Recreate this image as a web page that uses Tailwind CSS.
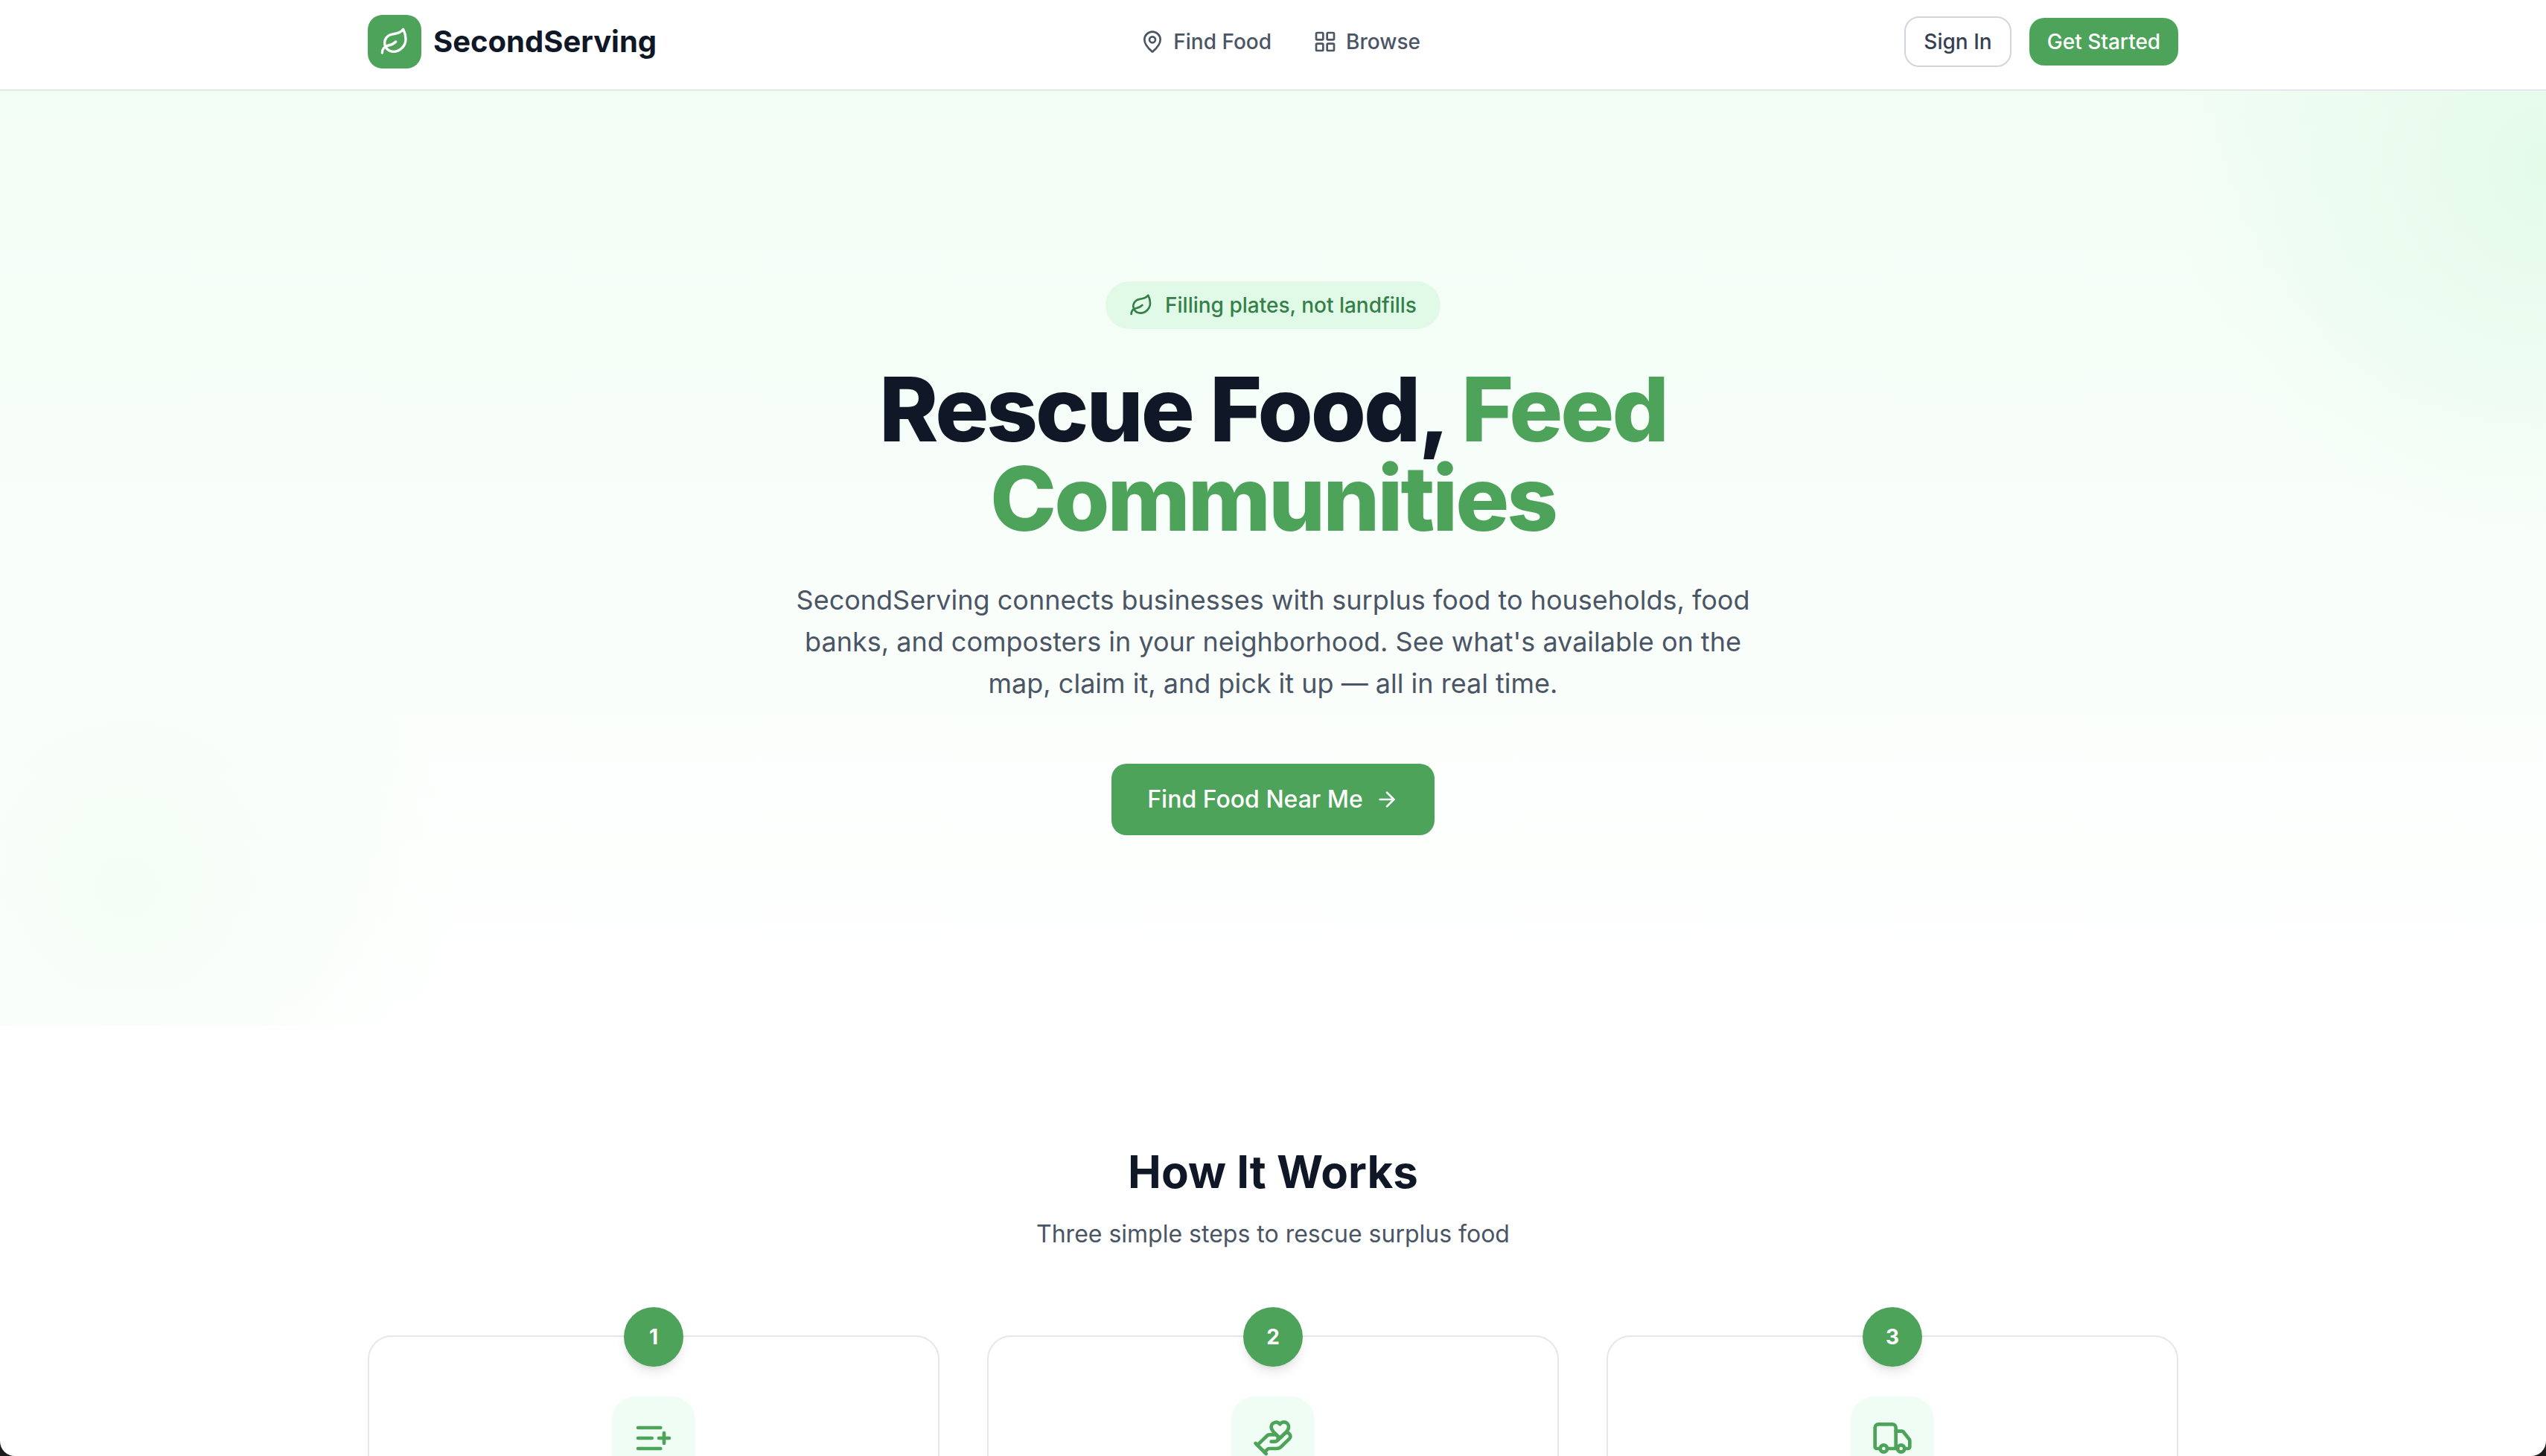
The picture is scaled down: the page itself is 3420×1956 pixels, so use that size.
<!DOCTYPE html>
<html lang="en">
<head>
<meta charset="utf-8">
<title>SecondServing</title>
<script src="https://cdn.jsdelivr.net/npm/@tailwindcss/browser@4"></script>
</head>
<body class="bg-[#1c1c1c] font-['Inter',sans-serif]">
<div class="h-[1956px] overflow-hidden rounded-b-[20px] bg-white">
  <header class="h-[122px] border-b-2 border-gray-200 bg-white pb-2">
    <div class="mx-auto flex h-[112px] w-[2432px] items-center justify-between">
      <a class="flex items-center gap-4">
        <span class="flex h-[72px] w-[72px] items-center justify-center rounded-[20px] bg-[#4ea35a]">
          <svg class="h-10 w-10" viewBox="0 0 24 24" fill="none" stroke="#fff" stroke-width="2" stroke-linecap="round" stroke-linejoin="round"><path d="M11 20A7 7 0 0 1 9.8 6.1C15.5 5 17 4.48 19 2c1 2 2 4.18 2 8 0 5.5-4.78 10-10 10Z"/><path d="M2 21c0-3 1.85-5.36 5.08-6C9.5 14.52 12 13 13 12"/></svg>
        </span>
        <span class="text-[40px] leading-[56px] font-bold text-gray-900">SecondServing</span>
      </a>
      <nav class="flex items-center gap-10 text-[28px] leading-[40px] font-medium text-gray-600">
        <a class="flex items-center gap-3 px-2 py-2">
          <svg class="h-8 w-8" viewBox="0 0 24 24" fill="none" stroke="currentColor" stroke-width="2" stroke-linecap="round" stroke-linejoin="round"><path d="M20 10c0 4.993-5.539 10.193-7.399 11.799a1 1 0 0 1-1.202 0C9.539 20.193 4 14.993 4 10a8 8 0 0 1 16 0"/><circle cx="12" cy="10" r="3"/></svg>
          Find Food
        </a>
        <a class="flex items-center gap-3 px-2 py-2">
          <svg class="h-8 w-8" viewBox="0 0 24 24" fill="none" stroke="currentColor" stroke-width="2" stroke-linecap="round" stroke-linejoin="round"><rect x="3" y="3" width="7" height="7" rx="1"/><rect x="14" y="3" width="7" height="7" rx="1"/><rect x="14" y="14" width="7" height="7" rx="1"/><rect x="3" y="14" width="7" height="7" rx="1"/></svg>
          Browse
        </a>
      </nav>
      <div class="flex items-center gap-6">
        <a class="flex h-[68px] w-[144px] items-center justify-center rounded-[20px] border-2 border-gray-300 bg-white text-[28px] font-medium text-gray-700">Sign In</a>
        <a class="flex h-16 w-[200px] items-center justify-center rounded-[20px] bg-[#4ea35a] text-[28px] font-medium text-white">Get Started</a>
      </div>
    </div>
  </header>

  <section class="relative h-[1256px] bg-[linear-gradient(to_bottom,#f2fdf5,#ffffff)]">
    <div class="absolute inset-0 bg-[radial-gradient(circle_at_100%_8%,#e4fbea_0%,transparent_500px),radial-gradient(circle_at_5%_85%,#f4fdf6_0%,transparent_440px)]"></div>
    <div class="relative flex flex-col items-center pt-[256px]">
      <div class="flex h-16 items-center gap-4 rounded-full bg-[#e1f9e7] px-8 text-[28px] font-medium text-[#358049]">
        <svg class="h-8 w-8" viewBox="0 0 24 24" fill="none" stroke="currentColor" stroke-width="2" stroke-linecap="round" stroke-linejoin="round"><path d="M11 20A7 7 0 0 1 9.8 6.1C15.5 5 17 4.48 19 2c1 2 2 4.18 2 8 0 5.5-4.78 10-10 10Z"/><path d="M2 21c0-3 1.85-5.36 5.08-6C9.5 14.52 12 13 13 12"/></svg>
        Filling plates, not landfills
      </div>
      <h1 class="mt-12 w-[1536px] text-center text-[120px] leading-[120px] font-extrabold tracking-[-3px] text-gray-900">Rescue Food, <span class="text-[#4ea35a]">Feed Communities</span></h1>
      <p class="mt-12 w-[1344px] text-center text-[36px] leading-[56px] text-gray-600">SecondServing connects businesses with surplus food to households, food banks, and composters in your neighborhood. See what's available on the map, claim it, and pick it up — all in real time.</p>
      <a class="mt-[80px] flex h-24 w-[434px] items-center justify-center gap-4 rounded-[20px] bg-[#4ea35a] text-[32px] font-medium text-white">
        Find Food Near Me
        <svg class="h-8 w-8" viewBox="0 0 24 24" fill="none" stroke="currentColor" stroke-width="2" stroke-linecap="round" stroke-linejoin="round"><path d="M5 12h14"/><path d="m12 5 7 7-7 7"/></svg>
      </a>
    </div>
  </section>

  <section class="pt-[160px]">
    <div class="mx-auto w-[2432px]">
      <h2 class="text-center text-[60px] leading-[72px] font-bold text-gray-900">How It Works</h2>
      <p class="mt-6 text-center text-[32px] leading-[48px] text-gray-600">Three simple steps to rescue surplus food</p>
      <div class="mt-[112px] grid grid-cols-3 gap-16">
        <div class="relative h-[600px] rounded-[32px] border-2 border-gray-200 bg-white pt-[80px]">
          <span class="absolute -top-10 left-1/2 flex h-20 w-20 -translate-x-1/2 items-center justify-center rounded-full bg-[#4ea35a] text-[28px] font-bold text-white shadow-lg">1</span>
          <span class="mx-auto flex h-28 w-28 items-center justify-center rounded-[32px] bg-[#f0fdf4] text-[#4ea35a]">
            <svg class="h-14 w-14" viewBox="0 0 24 24" fill="none" stroke="currentColor" stroke-width="2" stroke-linecap="round" stroke-linejoin="round"><path d="M11 12H3"/><path d="M16 6H3"/><path d="M16 18H3"/><path d="M18 9v6"/><path d="M21 12h-6"/></svg>
          </span>
        </div>
        <div class="relative h-[600px] rounded-[32px] border-2 border-gray-200 bg-white pt-[80px]">
          <span class="absolute -top-10 left-1/2 flex h-20 w-20 -translate-x-1/2 items-center justify-center rounded-full bg-[#4ea35a] text-[28px] font-bold text-white shadow-lg">2</span>
          <span class="mx-auto flex h-28 w-28 items-center justify-center rounded-[32px] bg-[#f0fdf4] text-[#4ea35a]">
            <svg class="h-14 w-14" viewBox="0 0 24 24" fill="none" stroke="currentColor" stroke-width="2" stroke-linecap="round" stroke-linejoin="round"><path d="M11 14h2a2 2 0 1 0 0-4h-3c-.6 0-1.1.2-1.4.6L3 16"/><path d="m7 20 1.6-1.4c.3-.4.8-.6 1.4-.6h4c1.1 0 2.1-.4 2.8-1.2l4.6-4.4a2 2 0 0 0-2.75-2.91l-4.2 3.9"/><path d="m2 15 6 6"/><path d="M19.5 8.5c.7-.7 1.5-1.6 1.5-2.7A2.73 2.73 0 0 0 16 4a2.78 2.78 0 0 0-5 1.8c0 1.2.8 2 1.5 2.8L16 12Z"/></svg>
          </span>
        </div>
        <div class="relative h-[600px] rounded-[32px] border-2 border-gray-200 bg-white pt-[80px]">
          <span class="absolute -top-10 left-1/2 flex h-20 w-20 -translate-x-1/2 items-center justify-center rounded-full bg-[#4ea35a] text-[28px] font-bold text-white shadow-lg">3</span>
          <span class="mx-auto flex h-28 w-28 items-center justify-center rounded-[32px] bg-[#f0fdf4] text-[#4ea35a]">
            <svg class="h-14 w-14" viewBox="0 0 24 24" fill="none" stroke="currentColor" stroke-width="2" stroke-linecap="round" stroke-linejoin="round"><path d="M14 18V6a2 2 0 0 0-2-2H4a2 2 0 0 0-2 2v11a1 1 0 0 0 1 1h2"/><path d="M15 18H9"/><path d="M19 18h2a1 1 0 0 0 1-1v-3.65a1 1 0 0 0-.22-.624l-3.48-4.35A1 1 0 0 0 17.52 8H14"/><circle cx="17" cy="18" r="2"/><circle cx="7" cy="18" r="2"/></svg>
          </span>
        </div>
      </div>
    </div>
  </section>
</div>
</body>
</html>
